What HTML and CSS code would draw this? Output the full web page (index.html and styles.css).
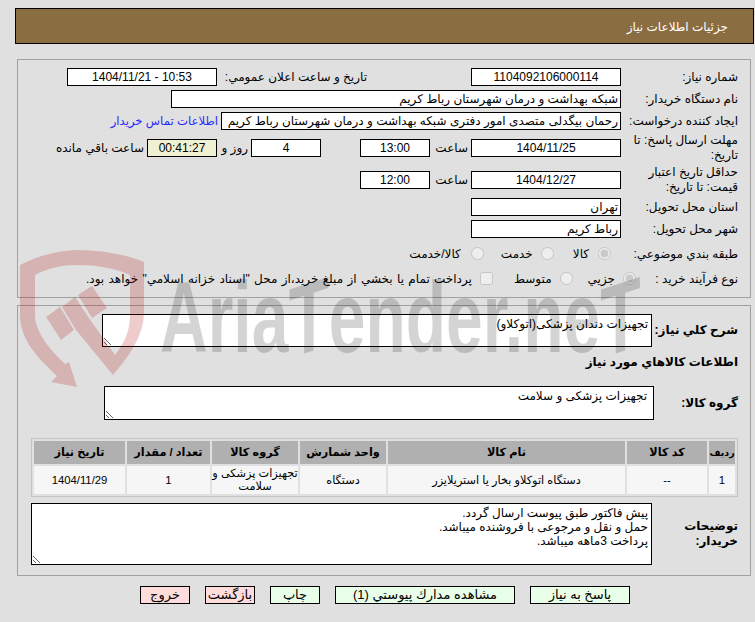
FILE: index.html
```html
<!DOCTYPE html>
<html lang="fa" dir="rtl">
<head>
<meta charset="utf-8">
<title>جزئيات اطلاعات نياز</title>
<link rel="stylesheet" href="styles.css">
</head>
<body>
<header class="title-bar">جزئيات اطلاعات نياز</header>

<section class="panel panel-top">
  <div class="row row-1">
    <span class="label">شماره نياز:</span>
    <span class="field w150 num">1104092106000114</span>
    <span class="label label-public">تاريخ و ساعت اعلان عمومي:</span>
    <span class="field w150 num">10:53 - 1404/11/21</span>
  </div>
  <div class="row row-2">
    <span class="label">نام دستگاه خريدار:</span>
    <span class="field w450">شبكه بهداشت و درمان شهرستان رباط كريم</span>
  </div>
  <div class="row row-2">
    <span class="label">ايجاد كننده درخواست:</span>
    <span class="field w400">رحمان بيگدلی متصدی امور دفتری شبكه بهداشت و درمان شهرستان رباط كريم</span>
    <a class="contact" href="#">اطلاعات تماس خريدار</a>
  </div>
  <div class="row row-4">
    <span class="label">مهلت ارسال پاسخ: تا تاريخ:</span>
    <span class="field w150 num">1404/11/25</span>
    <span class="mid-label">ساعت</span>
    <span class="field w70 num">13:00</span>
    <span class="days-gap"></span>
    <span class="field w70 num">4</span>
    <span class="mid-label days-label">روز و</span>
    <span class="field w70 num timer">00:41:27</span>
    <span class="remain">ساعت باقي مانده</span>
  </div>
  <div class="row row-5">
    <span class="label">حداقل تاريخ اعتبار قيمت: تا تاريخ:</span>
    <span class="field w150 num">1404/12/27</span>
    <span class="mid-label">ساعت</span>
    <span class="field w70 num">12:00</span>
  </div>
  <div class="row row-6">
    <span class="label">استان محل تحويل:</span>
    <span class="field w150">تهران</span>
  </div>
  <div class="row row-2">
    <span class="label">شهر محل تحويل:</span>
    <span class="field w150">رباط كريم</span>
  </div>
  <div class="row row-8">
    <span class="label">طبقه بندي موضوعي:</span>
    <label class="opt opt-kala"><input type="radio" name="cat" checked disabled><span>كالا</span></label>
    <label class="opt opt-service"><input type="radio" name="cat" disabled><span>خدمت</span></label>
    <label class="opt opt-both"><input type="radio" name="cat" disabled><span>كالا/خدمت</span></label>
  </div>
  <div class="row row-9">
    <span class="label">نوع فرآيند خريد :</span>
    <label class="opt opt-small"><input type="radio" name="proc" checked disabled><span>جزيي</span></label>
    <label class="opt opt-medium"><input type="radio" name="proc" disabled><span>متوسط</span></label>
    <label class="opt opt-check"><input type="checkbox" disabled><span>پرداخت تمام يا بخشي از مبلغ خريد،از محل "اسناد خزانه اسلامي" خواهد بود.</span></label>
  </div>
</section>

<section class="panel panel-bottom">
  <div class="row-area area-first">
    <span class="label strong label-98 one-line">شرح كلي نياز:</span>
    <textarea class="area w550 h33" readonly>تجهيزات دندان پزشكی(اتوكلاو)</textarea>
  </div>
  <h2 class="section-title">اطلاعات كالاهاي مورد نياز</h2>
  <div class="row-area area-group">
    <span class="label strong label-96 one-line">گروه كالا:</span>
    <textarea class="area w550 h34 inset" readonly>تجهيزات پزشكی و سلامت</textarea>
  </div>
  <table class="goods">
    <colgroup>
      <col class="c-row"><col class="c-code"><col class="c-name"><col class="c-unit"><col class="c-group"><col class="c-qty"><col class="c-date">
    </colgroup>
    <thead>
      <tr><th class="th-tight">رديف</th><th>كد كالا</th><th>نام كالا</th><th>واحد شمارش</th><th>گروه كالا</th><th>تعداد / مقدار</th><th>تاريخ نياز</th></tr>
    </thead>
    <tbody>
      <tr><td>1</td><td>--</td><td>دستگاه اتوكلاو بخار يا استريلايزر</td><td>دستگاه</td><td>تجهيزات پزشكی و سلامت</td><td>1</td><td>1404/11/29</td></tr>
    </tbody>
  </table>
  <div class="row-area area-notes">
    <span class="label strong label-98">توضيحات خريدار:</span>
    <textarea class="area w621 h62" readonly>پيش فاكتور طبق پيوست ارسال گردد.
حمل و نقل و مرجوعی با فروشنده ميباشد.
پرداخت 3ماهه ميباشد.</textarea>
  </div>
</section>

<nav class="actions">
  <button class="btn go w100" type="button">پاسخ به نياز</button>
  <button class="btn go w180" type="button">مشاهده مدارك پيوستي (1)</button>
  <button class="btn go w50" type="button">چاپ</button>
  <button class="btn stop w50" type="button">بازگشت</button>
  <button class="btn stop w50" type="button">خروج</button>
</nav>

<div class="watermark" aria-hidden="true">
  <svg class="wm-shield" viewBox="0 0 130 142" width="130" height="142">
    <path d="M5 17C25 7 45 2 63 2C85 2 110 6 129 14L129 64C129 87 115 107 98 127L61 82L47 59L60 49L76 73L100 107C110 94 115 82 115 67L115 27C100 20 80 17 63 17C47 17 33 20 20 27L20 67C20 84 35 102 50 116L54 114L62 139L36 134L42 128C23 110 5 92 5 67Z"/>
    <path d="M31 69L45 59L59 82L46 92Z"/>
    <path d="M63 47L77 38L92 60L77 70Z"/>
  </svg>
  <div class="wm-text" dir="ltr">Aria<span class="wm-t">T</span>ender.ne<span class="wm-t">T</span></div>
</div>
</body>
</html>
```

FILE: styles.css
```css
* { box-sizing: border-box; }
html, body { margin: 0; padding: 0; }
body {
  background: #e0e0e0;
  color: #000;
  font-family: "Liberation Sans", "DejaVu Sans", sans-serif;
  font-size: 12px;
  width: 755px;
  height: 622px;
  overflow: hidden;
  position: relative;
}
.title-bar {
  height: 36px;
  margin: 8px 1px 0 15px;
  padding-right: 25px;
  background: #8b6d42;
  border: 1px solid #000;
  color: #fff;
  line-height: 36px;
}
.panel { border: 1px solid #a0a0a0; }
.panel-top { height: 239px; margin: 15px 4px 0 17px; padding-top: 8px; }
.panel-bottom { height: 271px; margin: 7px 4px 0 17px; padding-top: 8px; }

.row { display: flex; align-items: center; height: 18px; margin-top: 4px; }
.row-1 { margin-top: 0; }
.row-4 { margin-top: 9px; }
.row-5 { margin-top: 14px; }
.row-6 { margin-top: 9px; }
.row-8 { margin-top: 7px; }
.row-9 { margin-top: 7px; }

.label { width: 129px; flex: none; padding: 0 12px 0 4px; line-height: 15px; }
.label-public { width: 254px; padding: 0 104px 0 0; }
.one-line { white-space: nowrap; padding-left: 0; }
.field {
  flex: none;
  height: 18px;
  background: #fff;
  border: 1px solid #000;
  line-height: 16px;
  padding: 0 2px;
  white-space: nowrap;
  overflow: hidden;
}
.num { text-align: center; }
.w150 { width: 150px; }
.w450 { width: 450px; }
.w400 { width: 400px; }
.w70 { width: 70px; }
.timer { background: #f0f0d2; }
.contact { color: #2a2aff; text-decoration: none; margin-right: 3px; white-space: nowrap; font-size: 11.7px; }
.mid-label { width: 41px; flex: none; padding-right: 3px; }
.days-gap { width: 39px; flex: none; }
.days-label { width: 34px; }
.remain { margin-right: 3px; white-space: nowrap; }

.opt { display: flex; align-items: center; white-space: nowrap; }
.opt input { margin: 0; width: 13px; height: 13px; flex: none; position: relative; top: -1px; }
.opt-kala { margin-right: 10px; }
.opt-service { margin-right: 19px; }
.opt-both { margin-right: 17px; }
.opt-kala span { margin-right: 9px; }
.opt-service span { margin-right: 8px; }
.opt-both span { margin-right: 10px; }
.opt-small { margin-right: -15px; }
.opt-medium { margin-right: 15px; }
.opt-check { margin-right: 21px; }
.opt-small span, .opt-medium span, .opt-check span { margin-right: 8px; }
.opt-check span { word-spacing: 1px; }

.row-area { display: flex; align-items: center; }
.strong { font-weight: bold; }
.label-98 { width: 98px; }
.label-96 { width: 96px; }
.area {
  display: block;
  flex: none;
  background: #fff;
  border: 1px solid #000;
  border-radius: 0;
  margin: 0;
  padding: 2px 3px;
  font: inherit;
  line-height: 14px;
  color: #000;
  overflow: hidden;
  outline: none;
}
.inset { padding-right: 6px; }
.w550 { width: 550px; }
.w621 { width: 621px; }
.h33 { height: 33px; }
.h34 { height: 34px; }
.h62 { height: 62px; }

.section-title { margin: 6px 0 0; padding-right: 12px; height: 18px; font-size: 12px; line-height: 18px; }
.area-group { margin-top: 15px; }

.goods {
  table-layout: fixed;
  width: 707px;
  margin: 18px 12px 0 0;
  border: 1px solid #c4c4c4;
  border-spacing: 2px;
  border-collapse: separate;
  font-size: 11.3px;
}
.c-row { width: 26px; }
.c-code { width: 80px; }
.c-name { width: 237px; }
.c-unit { width: 86px; }
.c-group { width: 86px; }
.c-qty { width: 83px; }
.c-date { width: 91px; }
.goods th { height: 23px; padding: 0; background: #b0b0b0; font-weight: bold; text-align: center; }
.goods .th-tight { font-size: 9.5px; }
.goods td { height: 28px; padding: 0; background: #f6f6f6; text-align: center; line-height: 13px; }
.area-notes { margin-top: 6px; }

.actions { display: flex; gap: 15px; margin: 10px 125px 0 0; }
.btn {
  height: 18px;
  padding: 0;
  border: 1px solid #000;
  border-radius: 0;
  font: inherit;
  font-size: 13px;
  color: #000;
  line-height: 16px;
  white-space: nowrap;
  overflow: hidden;
}
.go { background: #eaffea; }
.stop { background: #ffdcdc; }
.w100 { width: 100px; }
.w180 { width: 180px; }
.w50 { width: 50px; }

.watermark { position: absolute; left: 15px; top: 248px; width: 600px; height: 142px; pointer-events: none; }
.wm-shield { position: absolute; left: 0; top: 0; fill: rgba(170, 0, 0, 0.2); }
.wm-text {
  position: absolute;
  left: 145px;
  top: 19px;
  font-family: "Liberation Sans", sans-serif;
  font-weight: bold;
  font-size: 100px;
  line-height: 100px;
  color: rgba(0, 0, 0, 0.17);
  white-space: nowrap;
  transform: scaleX(0.66);
  transform-origin: left top;
}
.wm-t { display: inline-block; transform: skewY(-12deg); }
```
